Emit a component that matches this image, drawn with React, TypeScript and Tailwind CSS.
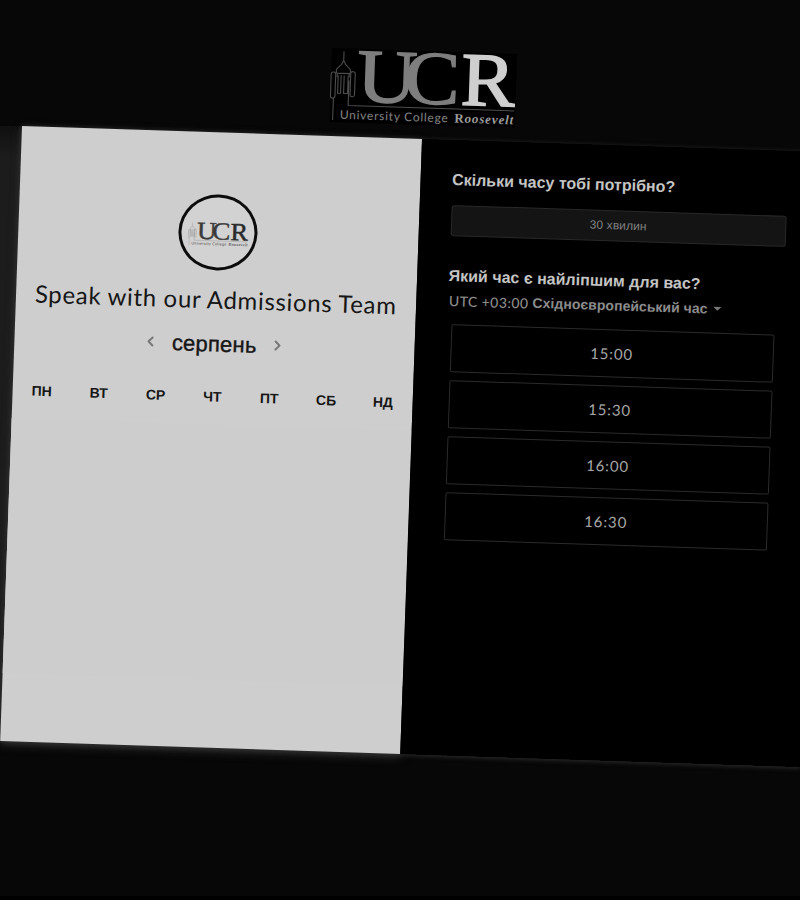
import { ChevronLeft, ChevronRight } from "lucide-react";

const days = ["ПН", "ВТ", "СР", "ЧТ", "ПТ", "СБ", "НД"];
const slots = ["15:00", "15:30", "16:00", "16:30"];

function Logo({ className, light }: { className: string; light: boolean }) {
  const u = light ? "#7e7e7e" : "#3a3a3a";
  const r = light ? "#cfcfcf" : "#2a2a2a";
  const t = light ? "#7c7c7c" : "#555555";
  const v = light ? "#9c9c9c" : "#555555";
  const line = light ? "#4c4c4c" : "#888888";
  return (
    <svg viewBox="0 0 185 74" className={className} fontFamily="'Liberation Serif', serif">
      {light && <rect width="185" height="74" fill="#000" />}
      <g fill="none" stroke={line} strokeWidth="1.1">
        <path d="M12 3v9M12 12l-2 4-5 5v4h14v-4l-5-5zM6 25v4M18 25v4" />
        <rect x="0" y="24" width="4.5" height="26" rx="2" />
        <rect x="19.5" y="23" width="4.5" height="25" rx="2" />
        <path d="M7 27v18h3V27M13 27v18h4V27M3 50v22M18 32v25h166" />
      </g>
      <text x="26" y="52.5" fontSize="76" textLength="60" lengthAdjust="spacingAndGlyphs" fill={u} stroke={u} strokeWidth="1.4">U</text>
      <text x="73" y="52.5" fontSize="76" textLength="56" lengthAdjust="spacingAndGlyphs" fill={u} stroke={u} strokeWidth="1.2">C</text>
      <text x="130" y="52.5" fontSize="76" textLength="54" lengthAdjust="spacingAndGlyphs" fill={r} stroke={r} strokeWidth="1.6">R</text>
      <text x="10" y="70.5" fontSize="12" fontFamily="Lato, sans-serif" fontWeight="500" textLength="108" fill={t}>University College</text>
      <text x="124.5" y="70.5" fontSize="13" fontWeight="700" fontStyle="italic" textLength="59" fill={v}>
        <tspan fontStyle="normal">R</tspan>oosevelt
      </text>
    </svg>
  );
}

export default function App() {
  return (
    <div className="relative h-[900px] w-[800px] overflow-hidden border-b-4 border-black bg-[#070707] font-['Liberation_Sans',sans-serif]">
      <div className="absolute left-0 top-[126px] h-[615px] w-[30px] bg-linear-to-b from-[#101010] via-[#1c1c1c] via-5% to-[#1c1c1c]" />
      <div className="w-[800px] origin-top-left [transform:matrix(1,0.0325,-0.0355,1,26.5,0)]">
        <header className="flex h-[126px] justify-center pr-px pt-[38px]">
          <Logo light className="h-[74px] w-[185px] overflow-visible" />
        </header>
        <main className="flex h-[615px] w-[800px] shadow-[0_1px_5px_#303030]">
          <section className="flex w-[399.5px] flex-col items-center bg-[#cecece] pt-[62px] text-[#161616] shadow-[0_3px_10px_#303030]">
            <div className="flex h-[76px] w-[79px] items-center justify-center rounded-[50%] border-[3px] border-[#0c0c0c] bg-[#d2d2d2] pt-[3px]">
              <Logo light={false} className="h-[24px] w-[60px] overflow-visible" />
            </div>
            <h1 className="mt-[11px] whitespace-nowrap font-[Lato,sans-serif] text-[24px] leading-[36px] tracking-[0.66px]">Speak with our Admissions Team</h1>
            <div className="mt-[9px] flex h-[34px] items-center gap-[13px]">
              <ChevronLeft strokeWidth={3} className="size-[16px] text-[#777]" />
              <span className="text-[22px] tracking-[0.2px] [-webkit-text-stroke:0.4px_#161616]">серпень</span>
              <ChevronRight strokeWidth={3} className="size-[16px] text-[#777]" />
            </div>
            <div className="mt-[26px] grid w-[398px] grid-cols-7 text-center text-[14px] font-bold leading-[20px]">
              {days.map((d) => <span key={d}>{d}</span>)}
            </div>
            <div className="mt-[18px] h-[255px] w-full bg-[#cdcdcd]" />
          </section>
          <section className="flex w-[400.5px] flex-col bg-black pl-[32px] pt-[30px] text-[#c4c4c4]">
            <h2 className="text-[16px] font-bold leading-[20px]">Скільки часу тобі потрібно?</h2>
            <button className="mt-[15px] h-[31px] w-[335px] rounded-[3px] border border-[#292929] bg-[#141414] pb-px text-[12px] tracking-[0.1px] text-[#808080]">30 хвилин</button>
            <h2 className="mt-[30px] text-[16px] font-bold leading-[20px]">Який час є найліпшим для вас?</h2>
            <div className="mt-[4px] flex h-[20px] items-center whitespace-pre pl-px text-[14px] font-bold text-[#8c8c8c]">
              <span className="font-[Lato,sans-serif] font-medium tracking-[0.45px]">UTC +03:00 </span>
              <span className="tracking-[0.04px]">Східноєвропейський час</span>
              <span className="ml-[6px] border-x-4 border-t-4 border-x-transparent border-t-[#777]" />
            </div>
            <div className="ml-[4px] mt-[14px] flex flex-col gap-[8px]">
              {slots.map((s) => (
                <button key={s} className="h-[48px] w-[323px] rounded-[2px] border border-[#2b2b2b] font-[Lato,sans-serif] text-[15px] tracking-[0.9px] text-[#a8a8a8]">{s}</button>
              ))}
            </div>
          </section>
        </main>
      </div>
    </div>
  );
}
